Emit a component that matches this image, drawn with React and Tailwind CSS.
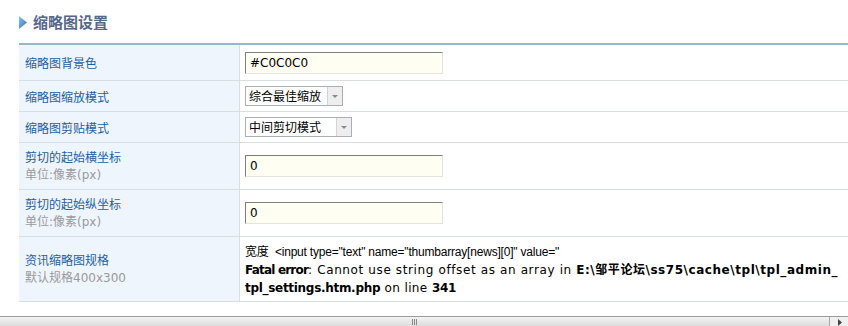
import React from "react";

const cjk = "font-['SimSun','Noto_Sans_CJK_SC',sans-serif]";
const verd = "font-['DejaVu_Sans','Noto_Sans_CJK_SC',sans-serif]";

const rows = [
  { label: "缩略图背景色", h: "h-[36px]", kind: "input", value: "#C0C0C0" },
  { label: "缩略图缩放模式", h: "h-[31px]", kind: "select", value: "综合最佳缩放", w: "w-[98px]" },
  { label: "缩略图剪贴模式", h: "h-[31px]", kind: "select", value: "中间剪切模式", w: "w-[107px]" },
  { label: "剪切的起始横坐标", sub: "单位:像素(px)", h: "h-[47px]", kind: "input", value: "0" },
  { label: "剪切的起始纵坐标", sub: "单位:像素(px)", h: "h-[47px]", kind: "input", value: "0" },
];

function TextInput({ value }) {
  return (
    <div className="w-[198px] h-[22px] bg-[#fefef2] border border-t-[#7f7f7f] border-l-[#7f7f7f] border-r-[#e4e4dc] border-b-[#e4e4dc] flex items-center pl-[4px] text-[12px] text-black font-['DejaVu_Sans',sans-serif]">
      {value}
    </div>
  );
}

function Select({ value, w }) {
  return (
    <div className={`${w} h-[20px] bg-white border border-[#a7afb6] flex items-center text-[12px] text-black ${cjk}`}>
      <span className="flex-1 pl-[3px] leading-none">{value}</span>
      <span className="w-[15px] h-full bg-[#eeeeee] border-l border-[#d4d4d4] flex items-center justify-center">
        <svg width="6" height="3" viewBox="0 0 6 3">
          <path d="M0 0h6L3 3z" fill="#8a8a8a" />
        </svg>
      </span>
    </div>
  );
}

function Label({ text, sub, lh }) {
  return (
    <div className="w-[221px] shrink-0 bg-[#eef5fd] border-r border-[#d9dee3] pl-[6px] flex flex-col justify-center">
      <div className={`text-[12px] ${lh} text-[#1f5fa3] ${cjk}`}>{text}</div>
      {sub && <div className={`text-[12px] ${lh} text-[#9a9a9a] ${verd}`}>{sub}</div>}
    </div>
  );
}

export default function App() {
  return (
    <div className="w-[848px] h-[326px] overflow-hidden bg-white flex flex-col">
      <div className="h-[316px] overflow-hidden">
        {/* title */}
        <div className="h-[43px] flex items-center pl-[19px] pt-[2px] gap-[6px]">
          <svg width="8" height="13" viewBox="0 0 8 13">
            <defs>
              <linearGradient id="tri" x1="0" y1="0" x2="1" y2="1">
                <stop offset="0" stopColor="#8fc1f0" />
                <stop offset="1" stopColor="#2e6fc2" />
              </linearGradient>
            </defs>
            <path d="M0 0L8 6.5L0 13z" fill="url(#tri)" />
          </svg>
          <span className={`text-[15px] font-bold text-[#56678a] ${cjk}`}>缩略图设置</span>
        </div>

        {/* table */}
        <div className="ml-[19px] w-[860px] border-t-2 border-[#96b7c8]">
          {rows.map((r, i) => (
            <div key={i} className={`flex ${r.h} border-b border-[#d9dee3]`}>
              <Label text={r.label} sub={r.sub} lh="leading-[19px]" />
              <div className="flex-1 pl-[5px] flex items-center">
                {r.kind === "input" ? <TextInput value={r.value} /> : <Select value={r.value} w={r.w} />}
              </div>
            </div>
          ))}
          <div className="flex h-[65px] border-b border-[#d9dee3]">
            <Label text="资讯缩略图规格" sub="默认规格400x300" lh="leading-[18px]" />
            <div className="flex-1 pl-[5px] flex flex-col justify-center text-[12px] leading-[18px] text-black">
              <div className="font-['Liberation_Sans','Noto_Sans_CJK_SC',sans-serif] tracking-[-0.2px]">
                <span className={cjk}>宽度</span>&nbsp; &lt;input type="text" name="thumbarray[news][0]" value="
              </div>
              <div className={`${verd} whitespace-nowrap tracking-[0.62px]`}>
                <b className="tracking-[-0.8px]">Fatal error</b>: Cannot use string offset as an array in{" "}
                <b className="tracking-[0.55px]">E:\邹平论坛\ss75\cache\tpl\tpl_admin_</b>
              </div>
              <div className={`${verd} tracking-[0.4px]`}>
                <b className="tracking-[-0.3px]">tpl_settings.htm.php</b> on line{" "}
                <b className="tracking-[-0.3px]">341</b>
              </div>
            </div>
          </div>
        </div>
      </div>

      {/* horizontal scrollbar */}
      <div className="h-[10px] flex border-t border-[#9c9c9c] bg-[#f0f0f0]">
        <div className="w-[830px] h-full bg-gradient-to-b from-[#f4f4f4] to-[#dcdcdc] border-r border-[#a8a8a8] flex items-center justify-center">
          <div className="flex gap-[1px]">
            <div className="w-[1px] h-[6px] bg-[#8a8a8a]" />
            <div className="w-[1px] h-[6px] bg-[#8a8a8a]" />
            <div className="w-[1px] h-[6px] bg-[#8a8a8a]" />
          </div>
        </div>
        <div className="flex-1 flex items-start pl-[8px] pt-[2px]">
          <svg width="4" height="7" viewBox="0 0 4 7">
            <path d="M0 0L4 3.5L0 7z" fill="#444" />
          </svg>
        </div>
      </div>
    </div>
  );
}
